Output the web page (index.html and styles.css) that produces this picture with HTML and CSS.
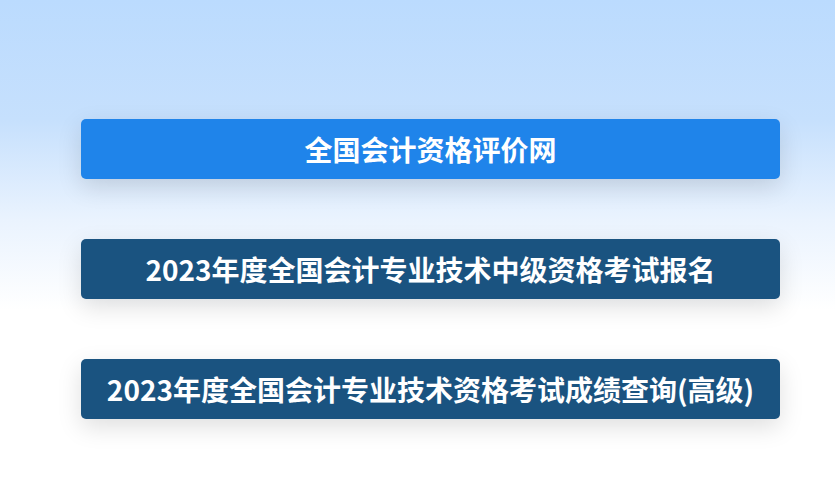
FILE: index.html
```html
<!DOCTYPE html>
<html lang="zh-CN">
<head>
    <meta charset="UTF-8">
    <meta name="viewport" content="width=device-width, initial-scale=1.0">
    <title>全国会计资格评价网</title>
    <link rel="stylesheet" href="styles.css">
</head>
<body>

    <div class="links">
        <a class="link-btn primary" href="#">全国会计资格评价网</a>
        <a class="link-btn" href="#">2023年度全国会计专业技术中级资格考试报名</a>
        <a class="link-btn" href="#">2023年度全国会计专业技术资格考试成绩查询(高级)</a>
    </div>

</body>
</html>
```

FILE: styles.css
```css
html, body {
    margin: 0;
    height: 100%;
}
body {
    font-family: "Noto Sans CJK SC", "Noto Sans", sans-serif;
    background: linear-gradient(to bottom, #bbdbfe 0px, #c6e0fd 120px, #eaf3fe 220px, #ffffff 310px);
    background-repeat: no-repeat;
    background-color: #fff;
}
.links {
    display: flex;
    flex-direction: column;
    gap: 60px;
    padding: 119px 55px 0 81px;
}
.link-btn {
    display: block;
    height: 60px;
    line-height: 60px;
    text-align: center;
    font-size: 28px;
    font-weight: bold;
    color: #fff;
    text-decoration: none;
    background-color: #1a5380;
    border-radius: 5px;
    box-shadow: 0 8px 24px rgba(0, 0, 0, 0.13);
    white-space: nowrap;
}
.link-btn.primary {
    background-color: #1f84ea;
}
```
